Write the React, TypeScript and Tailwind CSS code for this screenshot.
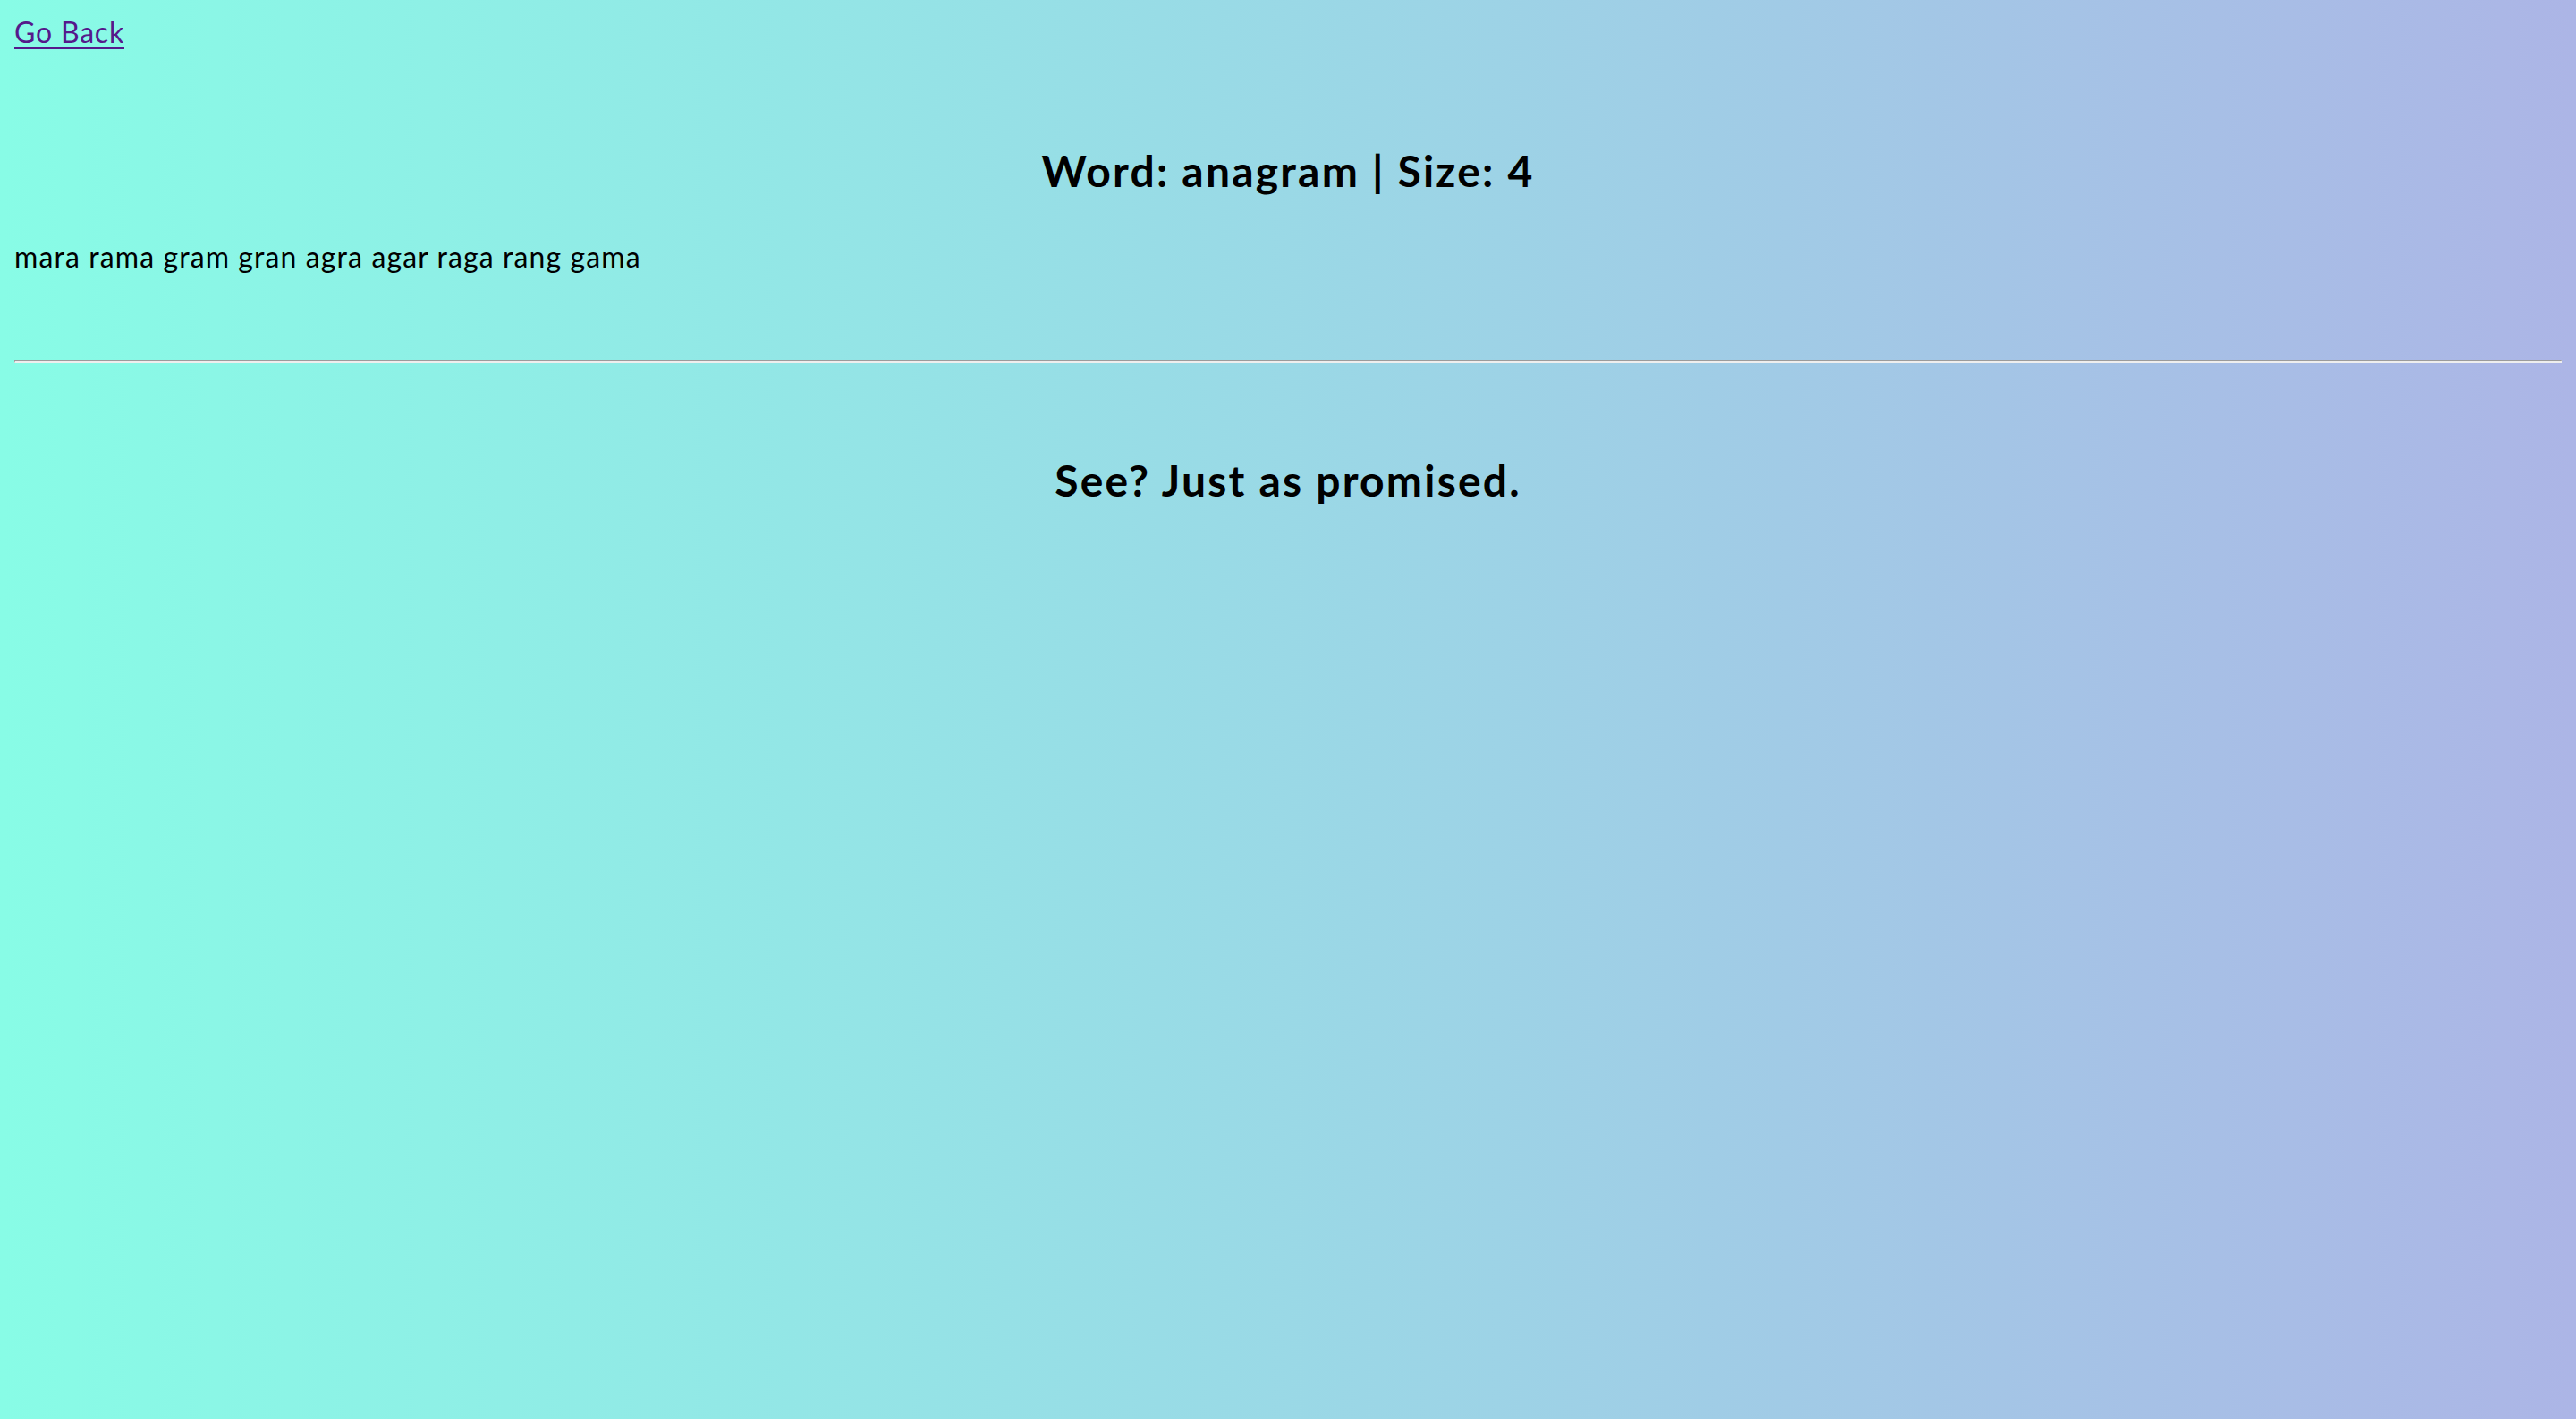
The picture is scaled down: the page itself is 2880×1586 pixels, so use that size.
import React from "react";

export default function App() {
  return (
    <div
      className="min-h-screen w-full px-4 pt-4 bg-[linear-gradient(to_right,#88fce6,#acb5e6)] text-black"
      style={{ fontFamily: "Lato, 'Noto Sans', sans-serif" }}
    >
      <div className="h-[40px] text-[32px] leading-[40px] tracking-[0.8px]">
        <a href="#" className="text-[#551a8b] underline decoration-2 underline-offset-[5px]">
          Go Back
        </a>
      </div>
      <h2 className="mt-[107px] h-[56px] text-center text-[48px] leading-[56px] font-bold tracking-[2.2px]">
        Word: anagram | Size: 4
      </h2>
      <p className="mt-[48px] h-[40px] text-[32px] leading-[40px] tracking-[1.1px]">
        mara rama gram gran agra agar raga rang gama
      </p>
      <div className="mt-[95px] h-[4px] border-t-2 border-b-2 border-l border-r border-t-[#9b9b9b] border-b-[#eeeeee] border-l-[#9b9b9b] border-r-[#eeeeee]" />
      <h2 className="mt-[103px] h-[56px] text-center text-[48px] leading-[56px] font-bold tracking-[2.2px]">
        See? Just as promised.
      </h2>
    </div>
  );
}
